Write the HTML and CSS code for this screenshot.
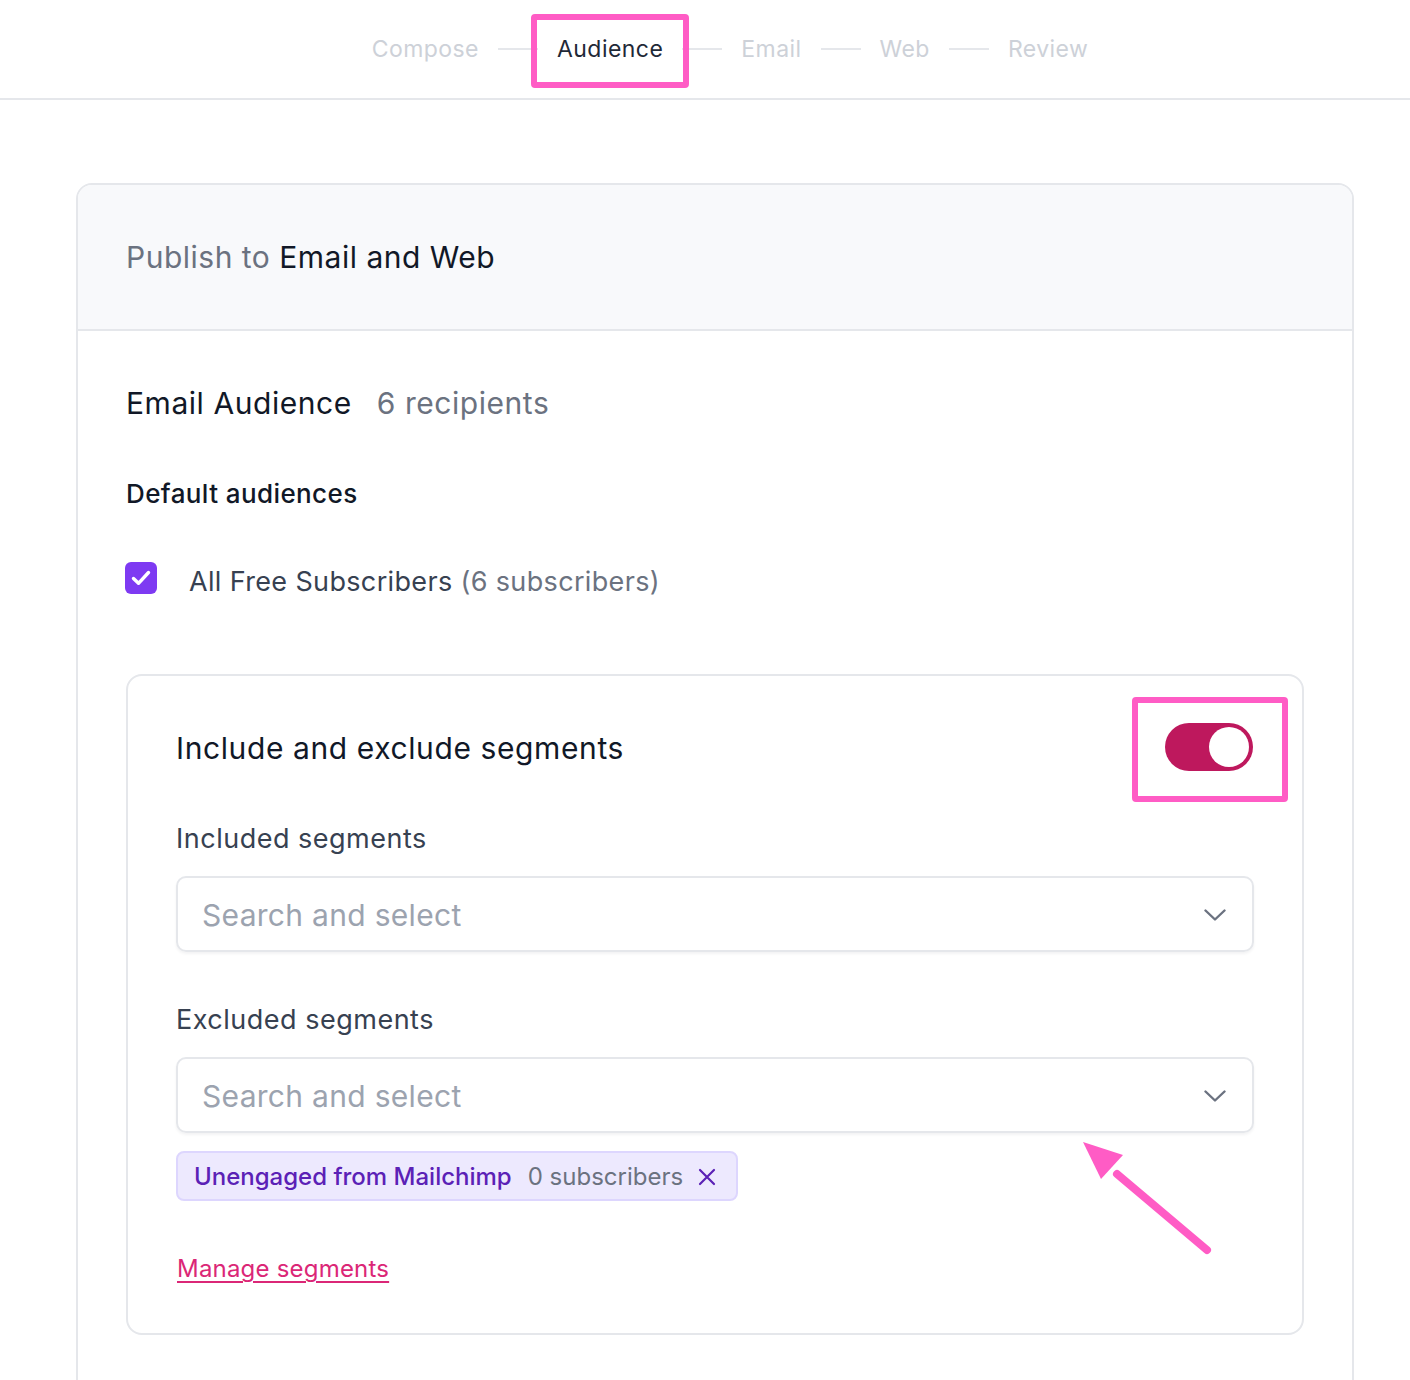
FILE: index.html
```html
<!DOCTYPE html>
<html lang="en">
<head>
<meta charset="utf-8">
<title>Publish - Audience</title>
<link rel="stylesheet" href="styles.css">
</head>
<body>
<header class="topbar">
  <nav class="steps">
    <span class="step">Compose</span>
    <span class="step-line"></span>
    <span class="step step-active">Audience</span>
    <span class="step-line"></span>
    <span class="step">Email</span>
    <span class="step-line"></span>
    <span class="step">Web</span>
    <span class="step-line"></span>
    <span class="step">Review</span>
  </nav>
</header>

<main class="page">
  <section class="card">
    <div class="card-head">
      <h1 class="card-title"><span class="muted">Publish to</span> Email and Web</h1>
    </div>
    <div class="card-body">
      <h2 class="aud-title">Email Audience <span class="aud-count">6 recipients</span></h2>

      <h3 class="sub-title">Default audiences</h3>

      <label class="check-row">
        <span class="checkbox">
          <svg width="32" height="32" viewBox="0 0 32 32" fill="none"><path d="M8.5 16.5l5 4.8 10-10.8" stroke="#fff" stroke-width="3.4" stroke-linecap="round" stroke-linejoin="round"/></svg>
        </span>
        <span class="check-label">All Free Subscribers <span class="muted">(6 subscribers)</span></span>
      </label>

      <div class="segments">
        <div class="seg-head">
          <h3 class="seg-title">Include and exclude segments</h3>
          <span class="toggle"><span class="knob"></span></span>
        </div>

        <div class="field-label">Included segments</div>
        <div class="select">
          <span class="placeholder">Search and select</span>
          <svg class="chev" width="22" height="12" viewBox="0 0 22 12" fill="none"><path d="M1.5 1.5l9.5 9 9.5-9" stroke="#6b7280" stroke-width="2.4" stroke-linecap="round" stroke-linejoin="round"/></svg>
        </div>

        <div class="field-label">Excluded segments</div>
        <div class="select">
          <span class="placeholder">Search and select</span>
          <svg class="chev" width="22" height="12" viewBox="0 0 22 12" fill="none"><path d="M1.5 1.5l9.5 9 9.5-9" stroke="#6b7280" stroke-width="2.4" stroke-linecap="round" stroke-linejoin="round"/></svg>
        </div>

        <div class="tags">
          <span class="tag">
            <span class="tag-name">Unengaged from Mailchimp</span>
            <span class="tag-count">0 subscribers</span>
            <svg class="tag-x" width="18" height="18" viewBox="0 0 18 18" fill="none"><path d="M2 2l14 14M16 2L2 16" stroke="#5b21b6" stroke-width="2.2" stroke-linecap="round"/></svg>
          </span>
        </div>

        <a class="manage" href="#">Manage segments</a>

        <svg class="arrow" width="140" height="125" viewBox="0 0 140 125" fill="none">
          <path d="M124 108 L34 32" stroke="#ff5cc5" stroke-width="8" stroke-linecap="round"/>
          <path d="M0 0 L40 13 L18 37 Z" fill="#ff5cc5"/>
        </svg>
      </div>
    </div>
  </section>
</main>
</body>
</html>
```
FILE: styles.css
```css
* { box-sizing: border-box; }

html, body {
  margin: 0;
  padding: 0;
  background: #ffffff;
  font-family: Inter, "Noto Sans", "Liberation Sans", sans-serif;
  color: #111827;
}

h1, h2, h3 { margin: 0; font-weight: 400; }

.topbar {
  height: 100px;
  border-bottom: 2px solid #e5e7eb;
  display: flex;
  align-items: center;
}

.steps {
  flex: 1;
  display: flex;
  align-items: center;
  justify-content: center;
  gap: 19px;
  padding-left: 50px;
}

.step {
  position: relative;
  font-size: 23px;
  line-height: 28px;
  color: #cdd1d8;
  letter-spacing: 0.45px;
}

.step-active { color: #1f2937; }

.step-active::after {
  content: "";
  position: absolute;
  left: -26px;
  right: -26px;
  top: -21px;
  bottom: -25px;
  border: 6px solid #ff5cc5;
  border-radius: 4px;
}

.step-line {
  width: 40px;
  height: 2px;
  background: #e5e7eb;
}

.page {
  padding: 83px 56px 0 76px;
}

.card {
  border: 2px solid #e5e7eb;
  border-radius: 16px;
}

.card-head {
  background: #f8f9fb;
  border-bottom: 2px solid #e5e7eb;
  border-radius: 14px 14px 0 0;
  padding: 52px 48px;
}

.card-title {
  font-size: 30px;
  line-height: 40px;
  letter-spacing: 0.5px;
  color: #111827;
}

.muted { color: #6b7280; }

.card-body {
  padding: 52px 48px 60px 48px;
}

.aud-title {
  font-size: 30px;
  line-height: 40px;
  letter-spacing: 0.55px;
  color: #111827;
}

.aud-count {
  color: #6b7280;
  margin-left: 16px;
}

.sub-title {
  margin-top: 55px;
  font-size: 26px;
  line-height: 32px;
  font-weight: 500;
  letter-spacing: 0.4px;
  color: #111827;
}

.check-row {
  margin-top: 52px;
  display: flex;
  align-items: flex-start;
  gap: 32px;
}

.checkbox {
  width: 32px;
  height: 32px;
  border-radius: 6px;
  background: #7e3af2;
  display: flex;
  align-items: center;
  justify-content: center;
  flex: none;
  margin-left: -1px;
}

.check-label {
  margin-top: 3px;
  font-size: 27px;
  line-height: 34px;
  letter-spacing: 0.35px;
  color: #374151;
}

.segments {
  position: relative;
  margin-top: 75px;
  border: 2px solid #e5e7eb;
  border-radius: 16px;
  padding: 47px 48px 48px 48px;
}

.seg-head {
  display: flex;
  align-items: center;
  justify-content: space-between;
  height: 48px;
}

.seg-title {
  font-size: 30px;
  line-height: 40px;
  letter-spacing: 0.6px;
  color: #111827;
  margin-top: 2px;
}

.toggle {
  position: relative;
  width: 88px;
  height: 48px;
  border-radius: 24px;
  background: #be185d;
  margin-right: 1px;
}

.toggle::after {
  content: "";
  position: absolute;
  left: -33px;
  right: -35px;
  top: -26px;
  bottom: -31px;
  border: 6px solid #ff5cc5;
  border-radius: 4px;
}

.knob {
  position: absolute;
  top: 4px;
  right: 4px;
  width: 40px;
  height: 40px;
  border-radius: 50%;
  background: #ffffff;
}

.field-label {
  margin-top: 52px;
  font-size: 27px;
  line-height: 32px;
  letter-spacing: 0.5px;
  color: #374151;
}

.select {
  margin-top: 21px;
  height: 76px;
  border: 2px solid #e5e7eb;
  border-radius: 10px;
  box-shadow: 0 2px 3px rgba(17, 24, 39, 0.05);
  display: flex;
  align-items: center;
  justify-content: space-between;
  padding: 2px 26px 0 24px;
}

.placeholder {
  font-size: 30px;
  line-height: 40px;
  letter-spacing: 0.3px;
  color: #9ca3af;
}

.chev { display: block; }

.tags {
  margin-top: 18px;
  display: flex;
}

.tag {
  display: inline-flex;
  align-items: center;
  height: 50px;
  background: #ede9fe;
  border: 2px solid #ddd6fe;
  border-radius: 8px;
  padding: 2px 20px 0 16px;
}

.tag-name {
  font-size: 24px;
  line-height: 30px;
  color: #5b21b6;
  font-weight: 500;
}

.tag-count {
  margin-left: 16px;
  font-size: 24px;
  line-height: 30px;
  color: #6b7280;
}

.tag-x { margin-left: 15px; display: block; }

.manage {
  display: inline-block;
  margin-top: 52px;
  margin-left: 1px;
  font-size: 24px;
  line-height: 32px;
  letter-spacing: 0.2px;
  color: #db2777;
  text-decoration: underline;
  text-underline-offset: 4px;
  text-decoration-thickness: 2px;
}

.arrow {
  position: absolute;
  left: 955px;
  top: 466px;
}
```
